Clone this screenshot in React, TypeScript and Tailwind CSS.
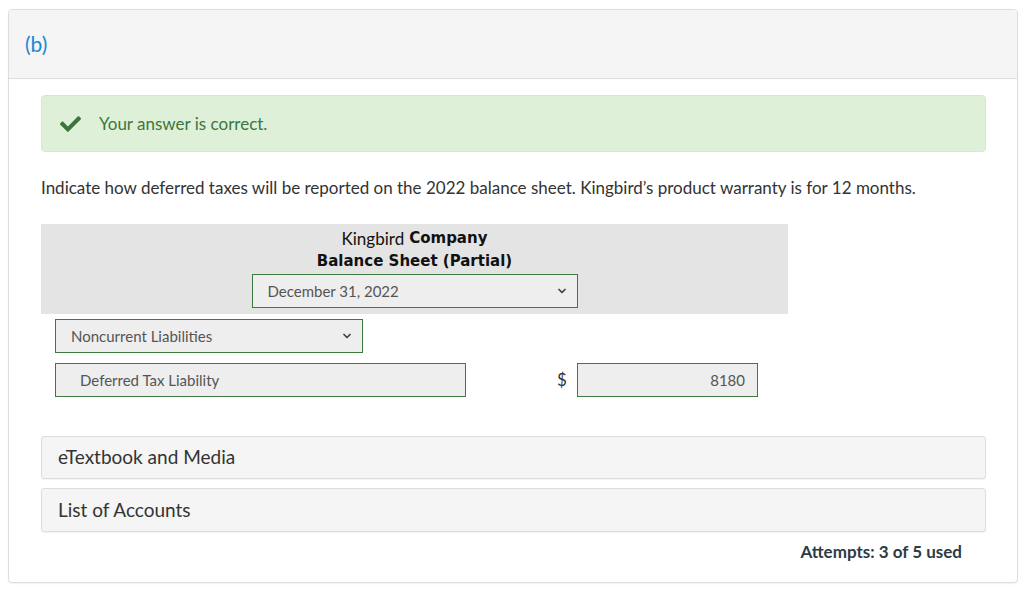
import { ChevronDown } from 'lucide-react';

function Select({ value, className }: { value: string; className: string }) {
    return (
        <div
            className={`flex items-center justify-between h-[34px] bg-[#eeeeee] border border-[#3d7a3d] pl-[15px] pr-[9px] text-[15px] text-[#555555] ${className}`}
        >
            <span>{value}</span>
            <ChevronDown size={12} strokeWidth={3.5} className="text-[#444]" />
        </div>
    );
}

function CheckIcon() {
    return (
        <svg width="21" height="17" viewBox="0 0 512 410" className="text-[#3c763d]">
            <path
                fill="currentColor"
                d="M173.9 402.6 7.5 236.2c-10-10-10-26.2 0-36.2l36.2-36.2c10-10 26.2-10 36.2 0L192 275.9 432.1 35.8c10-10 26.2-10 36.2 0l36.2 36.2c10 10 10 26.2 0 36.2L210.1 402.6c-10 10-26.2 10-36.2 0z"
            />
        </svg>
    );
}

export default function App() {
    return (
        <div className="w-[1024px] h-[593px] bg-white pt-[9px] pl-[8px] font-['Lato','Noto_Sans',sans-serif] text-[#2d3b45]">
            <div className="w-[1010px] h-[574px] border border-[#dddddd] rounded-[4px] shadow-[0_1px_2px_rgba(0,0,0,0.06)] overflow-hidden">
                {/* header */}
                <div className="h-[69px] bg-[#f5f5f5] border-b border-[#dddddd] flex items-center pl-[16px]">
                    <span className="text-[21px] text-[#1a8ad6]">(b)</span>
                </div>

                <div className="pl-[32px] pr-[32px]">
                    {/* correct banner */}
                    <div className="mt-[16px] w-[945px] h-[57px] bg-[#dff0d8] border border-[#d6e9c6] rounded-[4px] flex items-center pl-[18px]">
                        <CheckIcon />
                        <span className="ml-[18px] text-[17px] text-[#3c763d]">Your answer is correct.</span>
                    </div>

                    <p className="mt-[25px] text-[17px] leading-[22px] text-[#333333]">
                        Indicate how deferred taxes will be reported on the 2022 balance sheet. Kingbird’s product warranty is for 12 months.
                    </p>

                    {/* balance sheet header */}
                    <div className="mt-[25px] w-[747px] h-[90px] bg-[#e4e4e4] flex flex-col items-center pt-[3px]">
                        <div className="h-[23px] flex items-center gap-[5px] text-[#111]">
                            <span className="text-[17px] leading-[23px]">Kingbird</span>
                            <span className="font-bold font-['DejaVu_Sans',sans-serif] text-[15px] leading-[23px]">Company</span>
                        </div>
                        <div className="h-[23px] font-bold font-['DejaVu_Sans',sans-serif] text-[15px] leading-[23px] text-[#111]">
                            Balance Sheet (Partial)
                        </div>
                        <Select value="December 31, 2022" className="mt-[1px] w-[326px]" />
                    </div>

                    <div className="pl-[14px]">
                        <Select value="Noncurrent Liabilities" className="mt-[5px] w-[308px]" />

                        <div className="mt-[10px] flex items-center">
                            <div className="w-[411px] h-[34px] bg-[#eeeeee] border border-[#3d7a3d] flex items-center pl-[24px] text-[15px] text-[#555555]">
                                Deferred Tax Liability
                            </div>
                            <span className="ml-[91px] w-[20px] text-[17px] text-[#333]">$</span>
                            <div className="w-[181px] h-[34px] bg-[#eeeeee] border border-[#3d7a3d] flex items-center justify-end pr-[12px] text-[15px] text-[#555555]">
                                8180
                            </div>
                        </div>
                    </div>

                    {/* collapsible panels */}
                    <div className="mt-[39px] w-[945px] h-[43px] bg-[#f5f5f5] border border-[#dddddd] rounded-[3px] shadow-[0_1px_1px_rgba(0,0,0,0.05)] flex items-center pl-[16px] text-[19px] text-[#333333]">
                        eTextbook and Media
                    </div>
                    <div className="mt-[9px] w-[945px] h-[44px] bg-[#f5f5f5] border border-[#dddddd] rounded-[3px] shadow-[0_1px_1px_rgba(0,0,0,0.05)] flex items-center pl-[16px] text-[19px] text-[#333333]">
                        List of Accounts
                    </div>

                    <div className="w-[921px] mt-[7px] text-right text-[17px] font-bold text-[#2d3b45]">
                        Attempts: 3 of 5 used
                    </div>
                </div>
            </div>
        </div>
    );
}
